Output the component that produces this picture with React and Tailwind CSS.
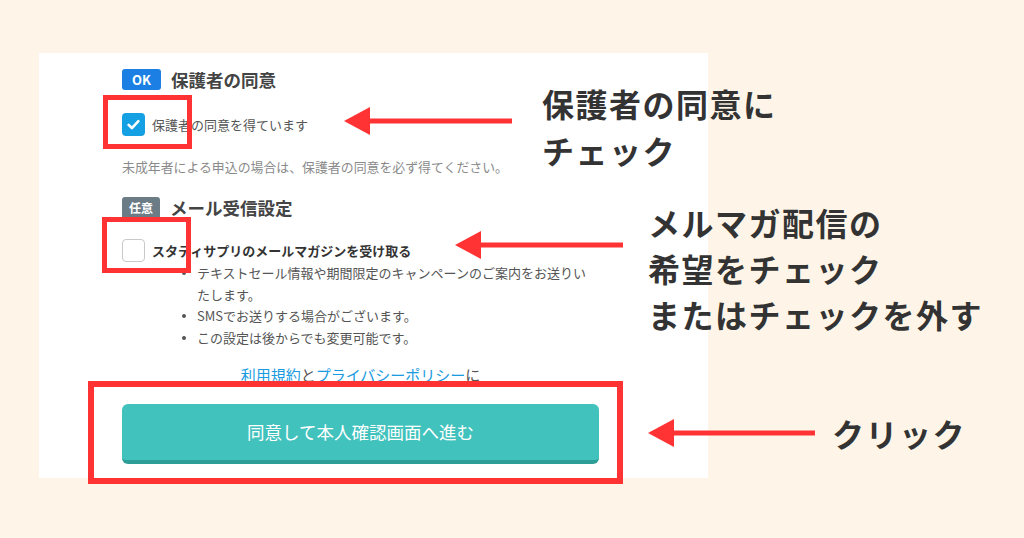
import React from "react";

const jp = { fontFamily: '"Noto Sans CJK JP", "Noto Sans", sans-serif' };

function Arrow({ className, width }) {
  return (
    <svg
      className={className}
      width={width}
      height="30"
      viewBox={`0 0 ${width} 30`}
    >
      <polygon points="0,15 26,1 26,29" fill="#ff3333" />
      <line x1="22" y1="15" x2={width} y2="15" stroke="#ff3333" strokeWidth="5" />
    </svg>
  );
}

function Check() {
  return (
    <svg width="15" height="15" viewBox="0 0 16 16">
      <path
        d="M2.8 8.4 L6.3 11.8 L13.2 4.4"
        fill="none"
        stroke="#fff"
        strokeWidth="2.8"
        strokeLinecap="round"
        strokeLinejoin="round"
      />
    </svg>
  );
}

function Bullet({ children }) {
  return (
    <li className="flex">
      <span className="w-[15px] shrink-0 flex pt-[9px]">
        <span className="block w-[4px] h-[4px] rounded-full bg-[#555]" />
      </span>
      <span className="w-[398px]">{children}</span>
    </li>
  );
}

export default function App() {
  return (
    <div
      className="relative w-[1024px] h-[538px] overflow-hidden bg-[#fef5e8] pt-[53px] pl-[39px]"
      style={jp}
    >
      {/* white panel */}
      <div className="w-[669px] h-[425px] bg-white pl-[83px] pt-[16px]">
        <div className="w-[477px] flex flex-col">
          {/* heading 1 */}
          <div className="flex items-center gap-[10px] h-[21px]">
            <span className="w-[39px] h-[21px] rounded-[3px] bg-[#1b7fe3] text-white text-[13px] font-bold flex items-center justify-center leading-none">
              OK
            </span>
            <span className="text-[17.5px] font-bold text-[#444] leading-none">
              保護者の同意
            </span>
          </div>

          {/* checkbox 1 */}
          <div className="mt-[23px] flex items-center gap-[7px] h-[23px]">
            <span className="w-[23px] h-[23px] rounded-[4px] bg-[#16a0e4] flex items-center justify-center">
              <Check />
            </span>
            <span className="text-[13px] text-[#555] leading-none">
              保護者の同意を得ています
            </span>
          </div>

          {/* note */}
          <p className="mt-[21px] text-[12.9px] leading-[20px] text-[#8a8a8a]">
            未成年者による申込の場合は、保護者の同意を必ず得てください。
          </p>

          {/* heading 2 */}
          <div className="mt-[20px] flex items-center gap-[10px] h-[22px]">
            <span className="w-[38px] h-[22px] rounded-[3px] bg-[#6c7c87] text-white text-[12px] font-bold flex items-center justify-center leading-none">
              任意
            </span>
            <span className="text-[17.5px] font-bold text-[#444] leading-none">
              メール受信設定
            </span>
          </div>

          {/* checkbox 2 */}
          <div className="mt-[19px] flex items-center gap-[7px] h-[24px]">
            <span className="w-[23px] h-[23px] rounded-[4px] bg-white border border-[#c9c9c9]" />
            <span className="text-[13px] font-bold text-[#333] leading-none">
              スタティサプリのメールマガジンを受け取る
            </span>
          </div>

          {/* bullets */}
          <ul className="pl-[60px] text-[13px] leading-[21.5px] text-[#555]">
            <Bullet>テキストセール情報や期間限定のキャンペーンのご案内をお送りいたします。</Bullet>
            <Bullet>SMSでお送りする場合がございます。</Bullet>
            <Bullet>この設定は後からでも変更可能です。</Bullet>
          </ul>

          {/* terms */}
          <p className="mt-[17px] text-center text-[15px] leading-[20px] text-[#555]">
            <span className="text-[#1a9be0] underline">利用規約</span>
            と
            <span className="text-[#1a9be0] underline">プライバシーポリシー</span>
            に
          </p>

          {/* button */}
          <button className="mt-[19px] h-[60px] w-[477px] rounded-[6px] bg-[#41c2bd] border-b-[4px] border-[#2d9d97] text-white text-[17.5px] flex items-center justify-center">
            同意して本人確認画面へ進む
          </button>
        </div>
      </div>

      {/* red highlight boxes */}
      <div className="absolute left-[103px] top-[95px] w-[89px] h-[54px] border-[5px] border-[#ff3333]" />
      <div className="absolute left-[102px] top-[217px] w-[89px] h-[56px] border-[5px] border-[#ff3333]" />
      <div className="absolute left-[88px] top-[381px] w-[535px] h-[103px] border-[6px] border-[#ff3333]" />

      {/* arrows */}
      <Arrow className="absolute left-[344px] top-[106px]" width={168} />
      <Arrow className="absolute left-[455px] top-[230px]" width={168} />
      <Arrow className="absolute left-[648px] top-[418px]" width={167} />

      {/* callout labels */}
      <div className="absolute left-[542px] top-[80px] text-[32px] leading-[47px] tracking-[1.5px] font-bold text-[#333]">
        <div>保護者の同意に</div>
        <div>チェック</div>
      </div>
      <div className="absolute left-[648px] top-[199px] text-[32px] leading-[46px] tracking-[1.5px] font-bold text-[#333]">
        <div>メルマガ配信の</div>
        <div>希望をチェック</div>
        <div>またはチェックを外す</div>
      </div>
      <div className="absolute left-[832px] top-[410px] text-[32px] leading-[46px] tracking-[1.5px] font-bold text-[#333]">
        クリック
      </div>
    </div>
  );
}
